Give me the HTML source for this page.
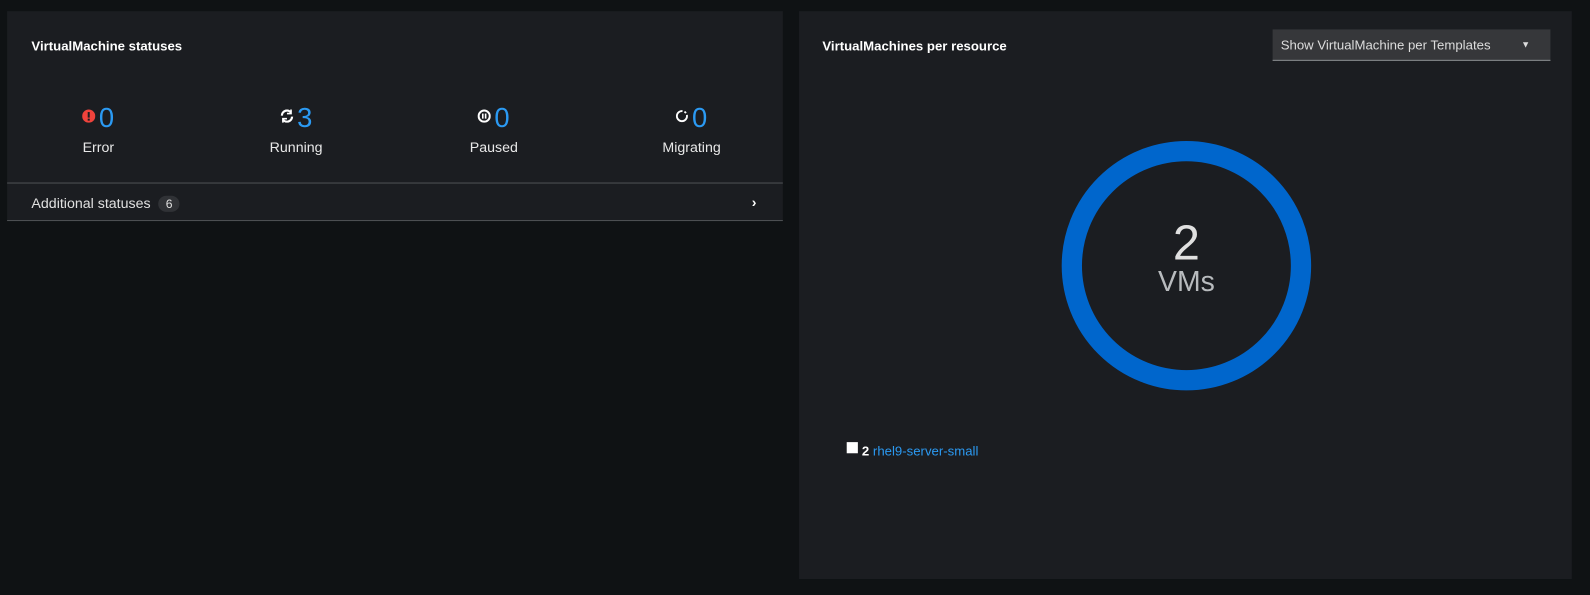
<!DOCTYPE html>
<html><head><style>
body{margin:0;background:#0f1214;width:1590px;height:595px;position:relative;font-family:"Liberation Sans",sans-serif;color:#e0e0e0;overflow:hidden}
#w{position:absolute;left:0;top:0;width:1568px;height:587px;transform:scale(1.01403);transform-origin:0 0}
.card{position:absolute;background:#1b1d21}
.t{position:absolute;font-size:13px;font-weight:bold;color:#fff}
.st{position:absolute;width:120px;text-align:center}
.num{font-size:27px;color:#2b9af3;line-height:30px}
.lbl{font-size:14px;color:#e8e8e8;margin-top:6px}
.ic{display:inline-block;vertical-align:middle;margin-right:3px;position:relative;top:-3px}
</style></head><body><div id="w">
<div class="card" style="left:7px;top:11px;width:765px;height:207px">
<div class="t" style="left:24px;top:27px">VirtualMachine statuses</div>
<div class="st" style="left:30px;top:90px"><div class="num"><svg class="ic" width="13" height="13"><circle cx="6.5" cy="6.5" r="6.5" fill="#f0433c"/><rect x="5.5" y="2.5" width="2" height="5.5" fill="#1b1d21"/><rect x="5.5" y="9" width="2" height="2" fill="#1b1d21"/></svg>0</div><div class="lbl">Error</div></div>
<div class="st" style="left:225px;top:90px"><div class="num"><svg class="ic" width="14" height="13" fill="none" stroke="#fff" stroke-width="2.2"><path d="M2 6a5 5 0 0 1 9-3"/><path d="M12 7a5 5 0 0 1-9 3"/><path d="M11 0v4h-4M3 13v-4h4" stroke-width="1.6"/></svg>3</div><div class="lbl">Running</div></div>
<div class="st" style="left:420px;top:90px"><div class="num"><svg class="ic" width="13" height="13"><circle cx="6.5" cy="6.5" r="5.5" fill="none" stroke="#fff" stroke-width="2"/><rect x="4.3" y="4" width="1.6" height="5" fill="#fff"/><rect x="7.1" y="4" width="1.6" height="5" fill="#fff"/></svg>0</div><div class="lbl">Paused</div></div>
<div class="st" style="left:615px;top:90px"><div class="num"><svg class="ic" width="13" height="13"><circle cx="6.5" cy="6.5" r="5" fill="none" stroke="#fff" stroke-width="1.8" stroke-dasharray="24 2 2 2"/></svg>0</div><div class="lbl">Migrating</div></div>
<div style="position:absolute;left:0;right:0;top:169px;border-top:1px solid #4f5255"></div>
<div style="position:absolute;left:24px;top:181px;font-size:14px;color:#e0e0e0">Additional statuses <span style="display:inline-block;background:#303236;border-radius:10px;padding:1px 7px;font-size:12px;margin-left:4px">6</span></div>
<div style="position:absolute;right:26px;top:180px;font-size:14px;font-weight:bold;color:#fff">›</div>
<div style="position:absolute;left:0;right:0;top:206px;border-top:1px solid #4f5255"></div>
</div>
<div class="card" style="left:788px;top:11px;width:762px;height:560px">
<div class="t" style="left:23px;top:27px">VirtualMachines per resource</div>
<div style="position:absolute;left:467px;top:18px;width:274px;height:31px;background:#36373a;border-bottom:1px solid #8a8d90;font-size:13px;color:#ddd;line-height:31px;padding-left:8px;box-sizing:border-box">Show VirtualMachine per Templates<span style="position:absolute;right:20px;top:0;font-size:9px">▼</span></div>
<svg style="position:absolute;left:0;top:0" width="762" height="560"><circle cx="382" cy="251" r="113" fill="none" stroke="#0066cc" stroke-width="20"/>
<text x="382" y="245" text-anchor="middle" font-family="Liberation Sans" font-size="48" fill="#e0e0e0">2</text>
<text x="382" y="276" text-anchor="middle" font-family="Liberation Sans" font-size="28" fill="#b8bbbe">VMs</text></svg>
<div style="position:absolute;left:47px;top:425px;width:11px;height:11px;background:#fff"></div>
<div style="position:absolute;left:62px;top:426px;font-size:13px"><b style="color:#fff">2</b> <span style="color:#2b9af3">rhel9-server-small</span></div>
</div>
</div></body></html>
